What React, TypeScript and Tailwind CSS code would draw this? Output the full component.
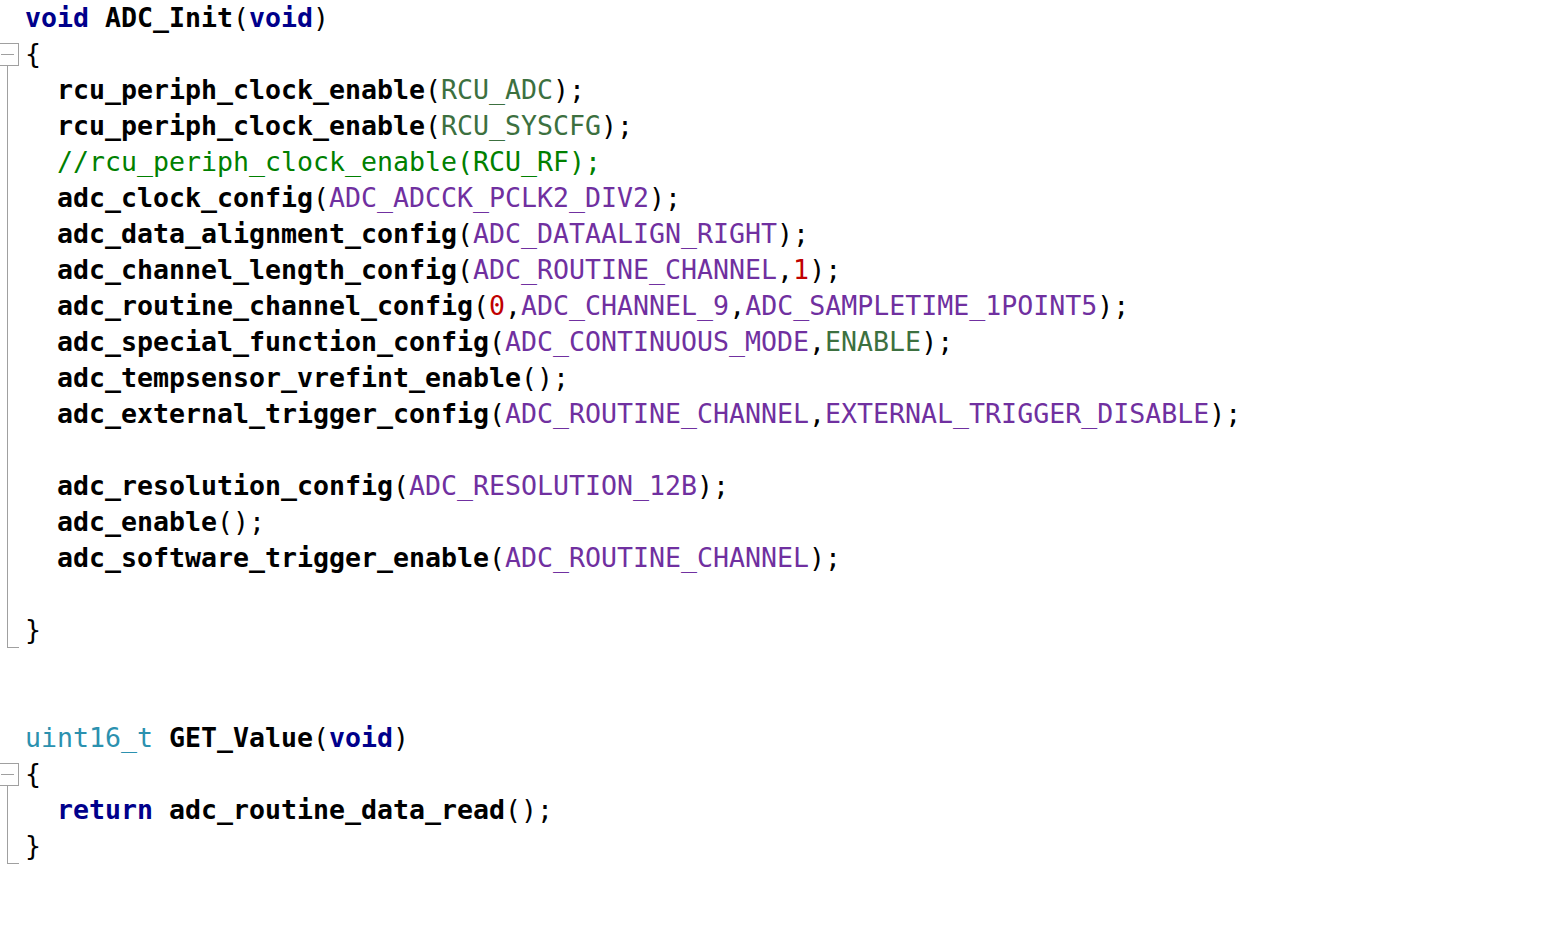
type Seg = [string, string]
type Fold = "open" | "mid" | "end" | "none"

const kw = "text-[#00008b] font-bold"
const fn = "text-black font-bold"
const mac = "text-[#7030a0]"
const en = "text-[#3c7040]"
const cm = "text-[#008000]"
const num = "text-[#c00000]"
const ty = "text-[#2b91af]"
const p = "text-black"

const lines: { fold: Fold; segs: Seg[] }[] = [
  { fold: "none", segs: [["void", kw], [" ", p], ["ADC_Init", fn], ["(", p], ["void", kw], [")", p]] },
  { fold: "open", segs: [["{", p]] },
  { fold: "mid", segs: [["  rcu_periph_clock_enable", fn], ["(", p], ["RCU_ADC", en], [");", p]] },
  { fold: "mid", segs: [["  rcu_periph_clock_enable", fn], ["(", p], ["RCU_SYSCFG", en], [");", p]] },
  { fold: "mid", segs: [["  ", p], ["//rcu_periph_clock_enable(RCU_RF);", cm]] },
  { fold: "mid", segs: [["  adc_clock_config", fn], ["(", p], ["ADC_ADCCK_PCLK2_DIV2", mac], [");", p]] },
  { fold: "mid", segs: [["  adc_data_alignment_config", fn], ["(", p], ["ADC_DATAALIGN_RIGHT", mac], [");", p]] },
  { fold: "mid", segs: [["  adc_channel_length_config", fn], ["(", p], ["ADC_ROUTINE_CHANNEL", mac], [",", p], ["1", num], [");", p]] },
  {
    fold: "mid",
    segs: [["  adc_routine_channel_config", fn], ["(", p], ["0", num], [",", p], ["ADC_CHANNEL_9", mac], [",", p], ["ADC_SAMPLETIME_1POINT5", mac], [");", p]],
  },
  { fold: "mid", segs: [["  adc_special_function_config", fn], ["(", p], ["ADC_CONTINUOUS_MODE", mac], [",", p], ["ENABLE", en], [");", p]] },
  { fold: "mid", segs: [["  adc_tempsensor_vrefint_enable", fn], ["();", p]] },
  {
    fold: "mid",
    segs: [["  adc_external_trigger_config", fn], ["(", p], ["ADC_ROUTINE_CHANNEL", mac], [",", p], ["EXTERNAL_TRIGGER_DISABLE", mac], [");", p]],
  },
  { fold: "mid", segs: [] },
  { fold: "mid", segs: [["  adc_resolution_config", fn], ["(", p], ["ADC_RESOLUTION_12B", mac], [");", p]] },
  { fold: "mid", segs: [["  adc_enable", fn], ["();", p]] },
  { fold: "mid", segs: [["  adc_software_trigger_enable", fn], ["(", p], ["ADC_ROUTINE_CHANNEL", mac], [");", p]] },
  { fold: "mid", segs: [] },
  { fold: "end", segs: [["}", p]] },
  { fold: "none", segs: [] },
  { fold: "none", segs: [] },
  { fold: "none", segs: [["uint16_t", ty], [" ", p], ["GET_Value", fn], ["(", p], ["void", kw], [")", p]] },
  { fold: "open", segs: [["{", p]] },
  { fold: "mid", segs: [["  ", p], ["return", kw], [" ", p], ["adc_routine_data_read", fn], ["();", p]] },
  { fold: "end", segs: [["}", p]] },
]

// Keil-style fold margin, drawn with borders in normal flow
function Gutter({ fold }: { fold: Fold }) {
  if (fold === "open") {
    return (
      <div className="flex flex-col w-[25px] shrink-0 h-full pt-[7px]">
        <div className="flex items-center w-[19px] h-[23px] border border-l-0 border-[#a0a0a0] pl-px">
          <div className="w-[13px] h-px bg-[#a0a0a0]" />
        </div>
        <div className="flex-1 ml-[7px] w-px bg-[#a0a0a0]" />
      </div>
    )
  }
  if (fold === "mid") {
    return (
      <div className="flex w-[25px] shrink-0 h-full pl-[7px]">
        <div className="w-px h-full bg-[#a0a0a0]" />
      </div>
    )
  }
  if (fold === "end") {
    return (
      <div className="flex w-[25px] shrink-0 h-full pl-[7px]">
        <div className="w-[12px] h-[36px] border-l border-b border-[#a0a0a0]" />
      </div>
    )
  }
  return <div className="w-[25px] shrink-0" />
}

export default function App() {
  return (
    <main className="min-h-screen w-full bg-white">
      <div
        className="flex flex-col text-[26.58px] leading-[36px]"
        style={{ fontFamily: '"DejaVu Sans Mono", "Liberation Mono", monospace' }}
      >
        {lines.map((line, i) => (
          <div key={i} className="flex h-[36px] items-stretch">
            <Gutter fold={line.fold} />
            <div className="whitespace-pre">
              {line.segs.map(([t, c], j) => (
                <span key={j} className={c}>
                  {t}
                </span>
              ))}
            </div>
          </div>
        ))}
      </div>
    </main>
  )
}
